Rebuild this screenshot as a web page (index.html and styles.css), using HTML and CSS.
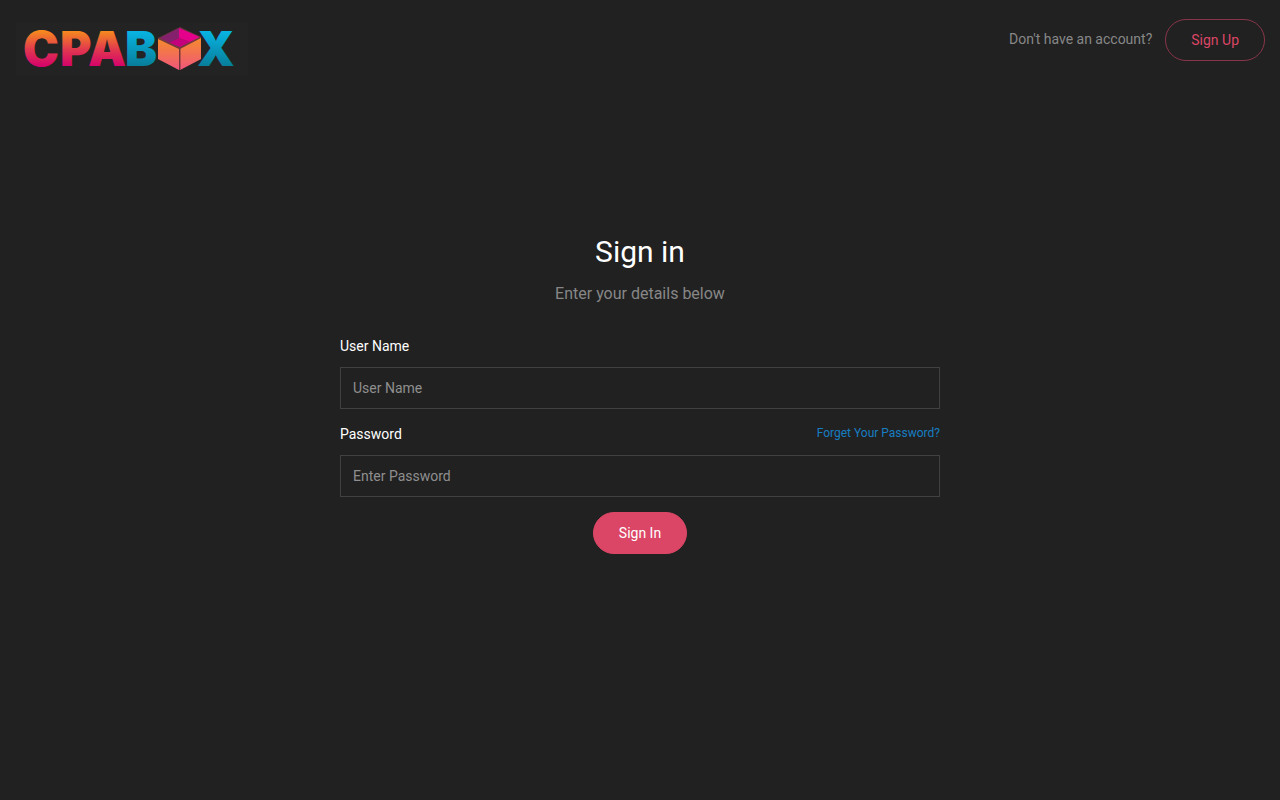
FILE: index.html
```html
<!DOCTYPE html>
<html lang="en">
<head>
    <meta charset="UTF-8">
    <meta name="viewport" content="width=device-width, initial-scale=1.0">
    <title>CPABOX - Sign in</title>
    <link rel="stylesheet" href="styles.css">
</head>
<body>
    <header class="header">
        <a href="#" class="logo">
            <svg width="232" height="54" viewBox="0 0 232 54" role="img" aria-label="CPABOX">
                <defs>
                    <linearGradient id="warm" gradientUnits="userSpaceOnUse" x1="0" y1="9" x2="0" y2="45">
                        <stop offset="0" stop-color="#f68a1e"/>
                        <stop offset="0.5" stop-color="#e23a4e"/>
                        <stop offset="1" stop-color="#d4006c"/>
                    </linearGradient>
                    <linearGradient id="cool" gradientUnits="userSpaceOnUse" x1="0" y1="9" x2="0" y2="45">
                        <stop offset="0" stop-color="#08b4e4"/>
                        <stop offset="1" stop-color="#087c98"/>
                    </linearGradient>
                    <linearGradient id="side" x1="0" y1="0" x2="0" y2="1">
                        <stop offset="0" stop-color="#f58a2c"/>
                        <stop offset="1" stop-color="#f0567c"/>
                    </linearGradient>
                </defs>
                <g class="logo-text">
                    <text x="7 44 72" y="44" fill="url(#warm)">CPA</text>
                    <text x="109" y="44" fill="url(#cool)">B</text>
                    <text x="181" y="44" fill="url(#cool)">X</text>
                </g>
                <!-- open box in place of the letter O -->
                <path d="M142 16 L164 5 L185 15 L185 37 L164 48 L142 37Z" fill="#6a3440"/>
                <path d="M144 16 L163 6 L163 16 L153 21Z" fill="#84206c"/>
                <path d="M163 6 L184 15 L174 20 L163 16Z" fill="#e4008a"/>
                <path d="M153 21 L163 16 L174 20 L164 25Z" fill="#c4007c"/>
                <path d="M142 17 L163 27 L163 48 L142 37Z" fill="url(#side)"/>
                <path d="M185 16 L164 27 L164 48 L185 37Z" fill="url(#side)"/>
                <path d="M142 16 L164 26 L185 15 M164 26 V48" fill="none" stroke="#7c3a3c"/>
            </svg>
        </a>
        <div class="account">
            <span class="account-text">Don't have an account?</span>
            <a href="#" class="btn btn-outline">Sign Up</a>
        </div>
    </header>

    <main class="container">
        <h1 class="title">Sign in</h1>
        <p class="subtitle">Enter your details below</p>
        <form id="loginForm">
            <div class="form-group">
                <div class="label-row">
                    <label for="username">User Name</label>
                </div>
                <input type="text" id="username" name="username" placeholder="User Name">
            </div>
            <div class="form-group">
                <div class="label-row">
                    <label for="password">Password</label>
                    <a href="#" class="forgot">Forget Your Password?</a>
                </div>
                <input type="password" id="password" name="password" placeholder="Enter Password">
            </div>
            <div class="form-action">
                <button type="submit" class="btn">Sign In</button>
            </div>
        </form>
    </main>
</body>
</html>
```
FILE: styles.css
```css
* {
    box-sizing: border-box;
}
body {
    font-family: Roboto, sans-serif;
    font-size: 14px;
    line-height: 20px;
    display: flex;
    flex-direction: column;
    min-height: 100vh;
    margin: 0;
    background-color: #212121;
    color: #fff;
}
a {
    text-decoration: none;
}
.header {
    display: flex;
    justify-content: space-between;
    align-items: flex-start;
    padding: 19px 15px 0 16px;
}
.logo {
    margin-top: 3px;
    background-color: #232323;
}
.logo svg {
    display: block;
    overflow: visible;
}
.logo-text {
    font-family: Inter, sans-serif;
    font-size: 48px;
    font-weight: 900;
}
.account {
    display: flex;
    align-items: center;
    gap: 13px;
}
.account-text {
    padding-bottom: 2px;
    color: #878787;
}
.btn {
    padding: 10px 25px;
    border: 1px solid #dc4666;
    border-radius: 60px;
    background-color: #dc4666;
    color: #fff;
    font-family: inherit;
    font-size: 14px;
    line-height: 20px;
    cursor: pointer;
}
.btn-outline {
    border-color: #883549;
    background-color: transparent;
    color: #dc4666;
}
.container {
    width: 100%;
    max-width: 630px;
    margin: auto;
    padding: 0 15px 88px;
}
.title {
    margin: 0 0 12px;
    font-size: 30px;
    font-weight: 400;
    line-height: 36px;
    text-align: center;
}
.subtitle {
    margin: 0 0 30px;
    color: #878787;
    font-size: 16px;
    line-height: 24px;
    text-align: center;
}
.form-group {
    margin-bottom: 15px;
}
.label-row {
    display: flex;
    justify-content: space-between;
    align-items: flex-start;
    margin-bottom: 11px;
}
.form-group input {
    display: block;
    width: 100%;
    height: 42px;
    padding: 0 12px;
    border: 1px solid #414141;
    border-radius: 0;
    background-color: transparent;
    color: #fff;
    font-family: inherit;
    font-size: 14px;
}
.form-group input::placeholder {
    color: #8f8f8f;
}
.forgot {
    color: #177ec1;
    font-size: 12px;
    line-height: 18px;
}
.form-action {
    text-align: center;
}
```
